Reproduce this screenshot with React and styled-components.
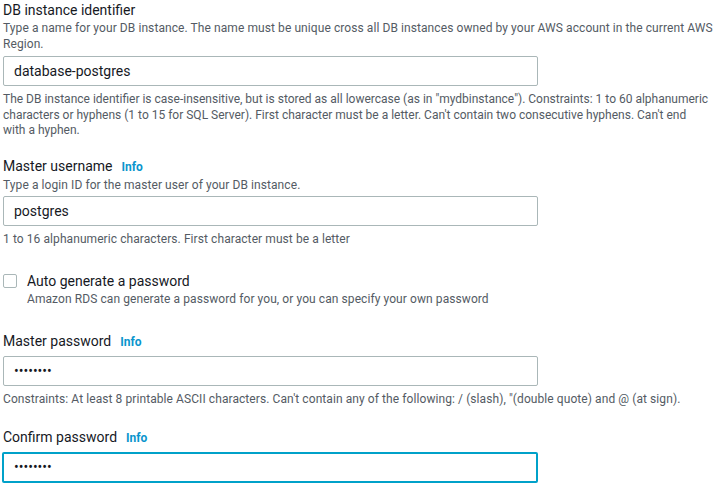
import styled, { createGlobalStyle } from "styled-components";

const Global = createGlobalStyle`
  html, body { margin: 0; padding: 0; background: #fff; }
  body {
    font-family: Roboto, "Noto Sans", sans-serif;
    color: #16191f;
  }
`;

const Page = styled.div`
  width: 716px;
  padding: 0 0 0 3px;
  display: flex;
  flex-direction: column;
`;

const Field = styled.div`
  display: flex;
  flex-direction: column;
  margin-top: ${(p) => p.gap || 0}px;
`;

const Label = styled.div`
  font-size: 14px;
  line-height: 20px;
  color: #16191f;
  display: flex;
  align-items: baseline;
  gap: 9px;
`;

const Info = styled.span`
  font-size: 12px;
  font-weight: 700;
  color: #0a95cd;
`;

const Desc = styled.div`
  font-size: 12px;
  line-height: 16px;
  letter-spacing: 0.08px;
  color: #545b64;
`;

const Hint = styled(Desc)`
  margin-top: ${(p) => p.top || 5}px;
  line-height: ${(p) => p.lh || 16}px;
  letter-spacing: ${(p) => p.ls ?? 0.08}px;
`;

const Input = styled.input`
  box-sizing: border-box;
  width: 535px;
  height: ${(p) => (p.$focus ? 31 : 30)}px;
  margin-top: ${(p) => (p.top === undefined ? 5 : p.top)}px;
  padding: 0 10px;
  font-family: inherit;
  font-size: 14px;
  color: #16191f;
  background: #fff;
  border: ${(p) => (p.$focus ? "2px solid #00a1c9" : "1px solid #aab7b8")};
  border-radius: 2px;
  outline: none;
  ${(p) => p.$focus && "margin-left: -1px; padding-left: 10px; width: 536px;"}
`;

const CheckRow = styled.label`
  display: flex;
  gap: 10px;
  margin-top: 24px;
`;

const Box = styled.span`
  box-sizing: border-box;
  width: 14px;
  height: 14px;
  margin-top: 3px;
  border: 1px solid #aab7b8;
  border-radius: 2px;
  flex: none;
`;

const CheckText = styled.div`
  display: flex;
  flex-direction: column;
`;

export default function App() {
  return (
    <>
      <Global />
      <Page>
        <Field>
          <Label>DB instance identifier</Label>
          <Desc>
            Type a name for your DB instance. The name must be unique cross all DB instances owned by your AWS account in the current AWS Region.
          </Desc>
          <Input defaultValue="database-postgres" top={4} />
          <Hint top={6} lh={15.5} ls={0}>
            The DB instance identifier is case-insensitive, but is stored as all lowercase (as in "mydbinstance"). Constraints: 1 to 60 alphanumeric characters or hyphens (1 to 15 for SQL Server). First character must be a letter. Can't contain two consecutive hyphens. Can't end
            <br />
            with a hyphen.
          </Hint>
        </Field>

        <Field gap={17}>
          <Label>
            Master username <Info>Info</Info>
          </Label>
          <Desc>Type a login ID for the master user of your DB instance.</Desc>
          <Input defaultValue="postgres" top={3} />
          <Hint>1 to 16 alphanumeric characters. First character must be a letter</Hint>
        </Field>

        <CheckRow>
          <Box />
          <CheckText>
            <Label>Auto generate a password</Label>
            <Desc>Amazon RDS can generate a password for you, or you can specify your own password</Desc>
          </CheckText>
        </CheckRow>

        <Field gap={24}>
          <Label>
            Master password <Info>Info</Info>
          </Label>
          <Input type="password" defaultValue="postgres" top={4} />
          <Hint>
            Constraints: At least 8 printable ASCII characters. Can't contain any of the following: / (slash), "(double quote) and @ (at sign).
          </Hint>
        </Field>

        <Field gap={20}>
          <Label>
            Confirm password <Info>Info</Info>
          </Label>
          <Input type="password" defaultValue="postgres" $focus top={4} />
        </Field>
      </Page>
    </>
  );
}
